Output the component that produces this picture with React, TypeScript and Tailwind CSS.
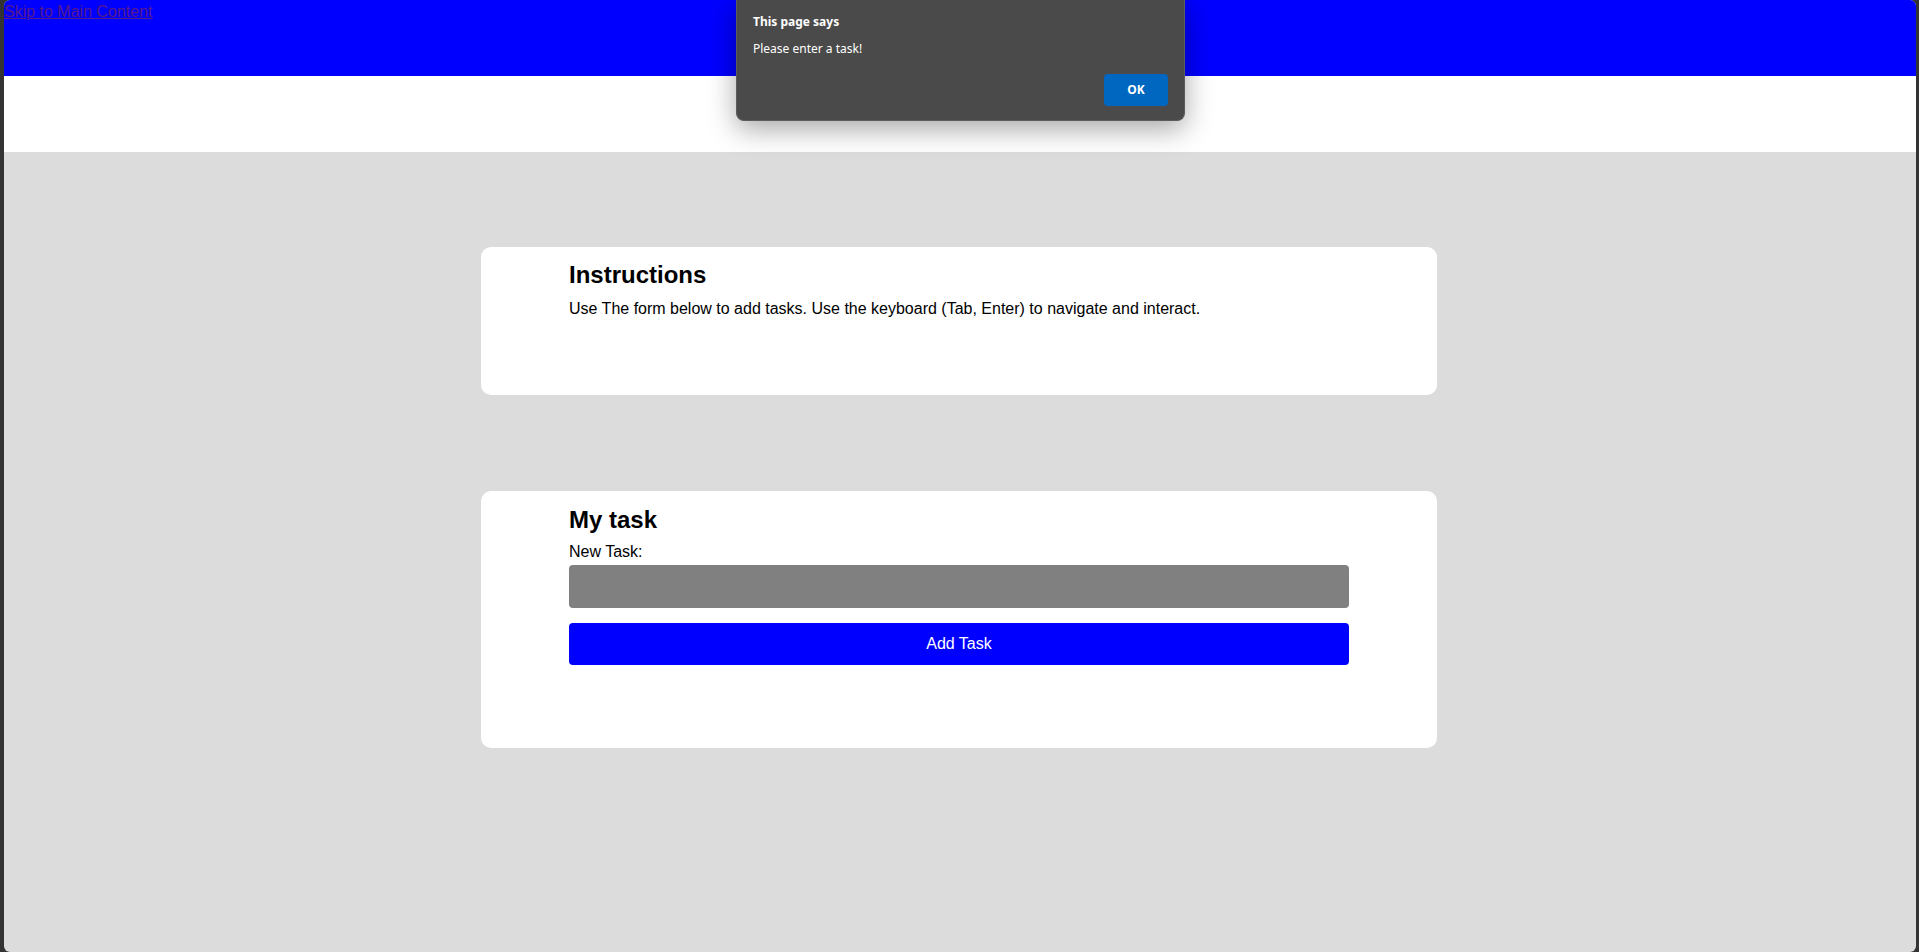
import React, { FormEvent, useState } from "react";

const Alert = () => {
  return (
    <div className="absolute left-[732px] top-0 w-[449px] h-[121px] bg-[#4a4a4a] border border-t-0 border-[#5c5c5c] rounded-b-[8px] shadow-[0_8px_28px_rgba(0,0,0,0.35)] px-[16px] pt-[14px] font-['Noto_Sans',sans-serif] text-white">
      <div className="text-[12px] leading-[16px] font-bold">This page says</div>
      <div className="text-[12px] leading-[16px] mt-[11px]">Please enter a task!</div>
      <div className="flex justify-end mt-[17px]">
        <button className="w-[64px] h-[32px] bg-[#0067c0] rounded-[4px] text-[12px] font-bold">
          OK
        </button>
      </div>
    </div>
  );
};

const App = () => {
  const [task, setTask] = useState("");

  const handleAdd = (e: FormEvent) => {
    e.preventDefault();
    setTask("");
  };

  return (
    <div className="h-[952px] bg-[#333333] pl-[4px] pr-[3px] font-['Liberation_Sans',Arial,sans-serif] text-black">
      <div className="relative h-full rounded-[6px] overflow-hidden bg-[#dcdcdc] flex flex-col">
        <header className="h-[76px] bg-[#0000ff]">
          <a href="#main" className="text-[16px] leading-[18px] underline text-[#551a8b]">
            Skip to Main Content
          </a>
        </header>
        <div className="h-[76px] bg-white" />
        <main id="main" className="flex flex-col items-center pt-[95px] pr-[2px] gap-[96px]">
          <section className="w-[956px] h-[148px] bg-white rounded-[10px] px-[88px] pt-[14px]">
            <h2 className="text-[24px] leading-[28px] font-bold">Instructions</h2>
            <p className="text-[16px] leading-[18px] mt-[11px]">
              Use The form below to add tasks. Use the keyboard (Tab, Enter) to navigate and interact.
            </p>
          </section>
          <section className="w-[956px] h-[257px] bg-white rounded-[10px] px-[88px] pt-[15px]">
            <h2 className="text-[24px] leading-[28px] font-bold">My task</h2>
            <form onSubmit={handleAdd} className="flex flex-col mt-[9px]">
              <label htmlFor="task" className="text-[16px] leading-[18px]">
                New Task:
              </label>
              <input
                id="task"
                value={task}
                onChange={(e: React.ChangeEvent<HTMLInputElement>) => setTask(e.target.value)}
                className="mt-[4px] h-[43px] w-full bg-[#808080] rounded-[4px] px-[10px] text-white outline-none"
              />
              <button type="submit" className="mt-[15px] h-[42px] w-full bg-[#0000ff] rounded-[4px] text-white text-[16px]">
                Add Task
              </button>
            </form>
          </section>
        </main>
        <Alert />
      </div>
    </div>
  );
};

export default App;
